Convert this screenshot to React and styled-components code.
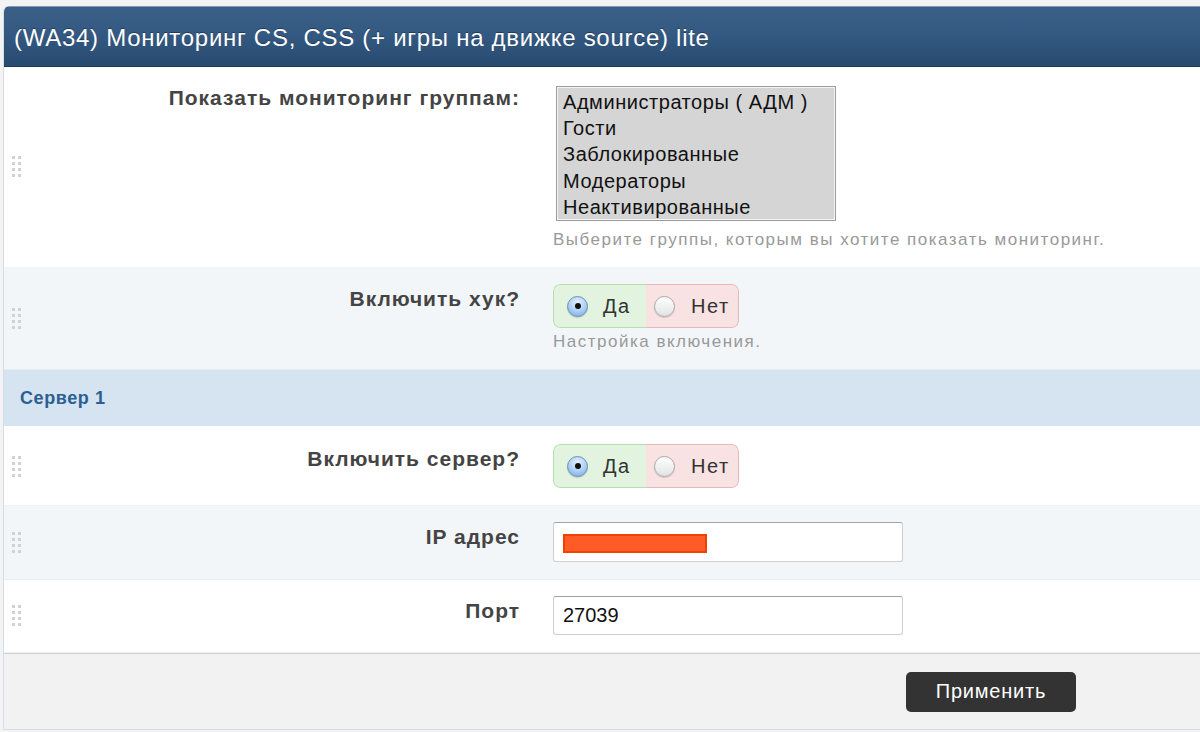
import React from "react";
import styled, { createGlobalStyle } from "styled-components";

const Global = createGlobalStyle`
  html, body { margin: 0; padding: 0; background: #f3f3f3; overflow: hidden; }
  body { font-family: "Liberation Sans", Arial, Helvetica, sans-serif; }
  * { box-sizing: border-box; }
`;

const Panel = styled.div`
  margin: 6px 0 0 3px;
  border-left: 1px solid #d3dfeb;
  border-bottom: 1px solid #d3dfeb;
  border-top-left-radius: 6px;
  overflow: hidden;
  background: #fff;
`;

const Header = styled.div`
  height: 61px;
  display: flex;
  align-items: center;
  padding: 2px 0 0 10px;
  background: linear-gradient(#3a6088 0%, #335881 50%, #274a6f 100%);
  border-top: 1px solid #7f9bbb;
  border-bottom: 1px solid #1d3753;
  color: #fff;
  font-size: 24px;
  letter-spacing: 0.72px;
  text-shadow: 0 -1px 0 rgba(0, 0, 0, 0.35);
`;

const Row = styled.div`
  display: grid;
  grid-template-columns: 24px 525px 1fr;
  align-items: start;
  padding: 16px 0 17px;
  background: ${(p) => (p.$alt ? "#f3f6f9" : "#fff")};
  border-bottom: 1px solid ${(p) => (p.$alt ? "#e6ecf2" : "#f0f3f6")};
`;

const Handle = styled.div`
  align-self: center;
  margin-left: 8px;
  display: grid;
  grid-template-columns: 3px 3px;
  grid-auto-rows: 3px;
  gap: 3px 3px;
  width: 9px;
  span {
    background: #d2d2d2;
    display: block;
  }
`;

const Label = styled.div`
  padding: 3px 33px 0 0;
  text-align: right;
  font-weight: bold;
  font-size: 21px;
  line-height: 24px;
  letter-spacing: 1px;
  color: #444;
`;

const Control = styled.div`
  display: flex;
  flex-direction: column;
  align-items: flex-start;
`;

const ListBox = styled.div`
  margin: 3px 0 0 3px;
  width: 280px;
  height: 135px;
  background: #d5d5d5;
  border: 1px solid #9c9c9c;
  box-shadow: inset 0 0 0 1px #f4f4f4;
  padding: 2px 6px;
  overflow: hidden;
`;

const ListItem = styled.div`
  font-size: 20px;
  line-height: 26.2px;
  letter-spacing: 0.55px;
  color: #111;
  white-space: nowrap;
`;

const Hint = styled.div`
  margin-top: ${(p) => p.$mt || 4}px;
  font-size: 17px;
  line-height: 20px;
  color: #999;
  letter-spacing: 1.5px;
`;

const RadioGroup = styled.div`
  display: flex;
  height: 44px;
  border-radius: 7px;
  overflow: hidden;
`;

const RadioOption = styled.label`
  display: flex;
  align-items: center;
  gap: ${(p) => p.$gap}px;
  width: ${(p) => p.$w}px;
  padding-left: ${(p) => p.$pl}px;
  font-size: 20px;
  letter-spacing: 1.5px;
  color: #333;
  background: ${(p) => (p.$yes ? "#e2f3df" : "#f8e2e2")};
  border: 1px solid ${(p) => (p.$yes ? "#b7deb0" : "#e7b9b9")};
  ${(p) =>
    p.$yes
      ? "border-right: none; border-radius: 7px 0 0 7px;"
      : "border-left: none; border-radius: 0 7px 7px 0;"}
`;

const RadioDot = styled.span`
  width: 21px;
  height: 21px;
  border-radius: 50%;
  flex: none;
  position: relative;
  border: 1px solid ${(p) => (p.$on ? "#6d8fb8" : "#a9a9a9")};
  background: ${(p) =>
    p.$on
      ? "radial-gradient(circle at 50% 30%, #e6f2fe 0%, #b5d5f5 45%, #6fa8e4 100%)"
      : "linear-gradient(#ffffff, #e2e2e2)"};
  box-shadow: 0 1px 1px rgba(0, 0, 0, 0.15);
  &::after {
    content: "";
    display: ${(p) => (p.$on ? "block" : "none")};
    position: absolute;
    left: 50%;
    top: 50%;
    width: 6px;
    height: 6px;
    margin: -3px 0 0 -3px;
    border-radius: 50%;
    background: #111;
  }
`;

const SectionHead = styled.div`
  height: 58px;
  display: flex;
  align-items: center;
  padding: 0 0 0 16px;
  background: #d6e3f0;
  border-bottom: 2px solid #fff;
  color: #2c6092;
  font-weight: bold;
  font-size: 18px;
  letter-spacing: 0.6px;
`;

const TextBox = styled.div`
  width: 350px;
  height: ${(p) => p.$h || 40}px;
  display: flex;
  align-items: center;
  padding: 0 9px;
  background: #fff;
  border: 1px solid #cfcfcf;
  border-top-color: #a3a3a3;
  border-radius: 3px;
  font-size: 20px;
  color: #111;
`;

const Redacted = styled.span`
  display: block;
  width: 144px;
  height: 19px;
  margin-top: 2px;
  background: #ff5b27;
  border: 2px solid #f04200;
`;

const Footer = styled.div`
  height: 76px;
  display: flex;
  align-items: center;
  justify-content: flex-end;
  padding: 0 124px 0 0;
  background: #f2f2f2;
  border-top: 1px solid #cfcfcf;
`;

const Button = styled.button`
  width: 170px;
  height: 40px;
  background: #333;
  border: none;
  border-radius: 5px;
  color: #fff;
  font-family: "Liberation Sans", Arial, sans-serif;
  font-size: 20px;
  letter-spacing: 0.8px;
  cursor: pointer;
`;

const DragHandle = () => (
  <Handle>
    {Array.from({ length: 8 }).map((_, i) => (
      <span key={i} />
    ))}
  </Handle>
);

const YesNo = () => (
  <RadioGroup>
    <RadioOption $yes $w={93} $pl={13} $gap={15}>
      <RadioDot $on />
      Да
    </RadioOption>
    <RadioOption $w={93} $pl={8} $gap={16}>
      <RadioDot />
      Нет
    </RadioOption>
  </RadioGroup>
);

const groups = [
  "Администраторы ( АДМ )",
  "Гости",
  "Заблокированные",
  "Модераторы",
  "Неактивированные",
];

export default function App() {
  return (
    <>
      <Global />
      <Panel>
        <Header>(WA34) Мониторинг CS, CSS (+ игры на движке source) lite</Header>

        <Row>
          <DragHandle />
          <Label>Показать мониторинг группам:</Label>
          <Control>
            <ListBox>
              {groups.map((g) => (
                <ListItem key={g}>{g}</ListItem>
              ))}
            </ListBox>
            <Hint $mt={9}>Выберите группы, которым вы хотите показать мониторинг.</Hint>
          </Control>
        </Row>

        <Row $alt>
          <DragHandle />
          <Label>Включить хук?</Label>
          <Control>
            <YesNo />
            <Hint>Настройка включения.</Hint>
          </Control>
        </Row>

        <SectionHead>Сервер 1</SectionHead>

        <Row>
          <DragHandle />
          <Label>Включить сервер?</Label>
          <Control>
            <YesNo />
          </Control>
        </Row>

        <Row $alt>
          <DragHandle />
          <Label>IP адрес</Label>
          <Control>
            <TextBox>
              <Redacted />
            </TextBox>
          </Control>
        </Row>

        <Row>
          <DragHandle />
          <Label>Порт</Label>
          <Control>
            <TextBox $h={39}>27039</TextBox>
          </Control>
        </Row>

        <Footer>
          <Button>Применить</Button>
        </Footer>
      </Panel>
    </>
  );
}
